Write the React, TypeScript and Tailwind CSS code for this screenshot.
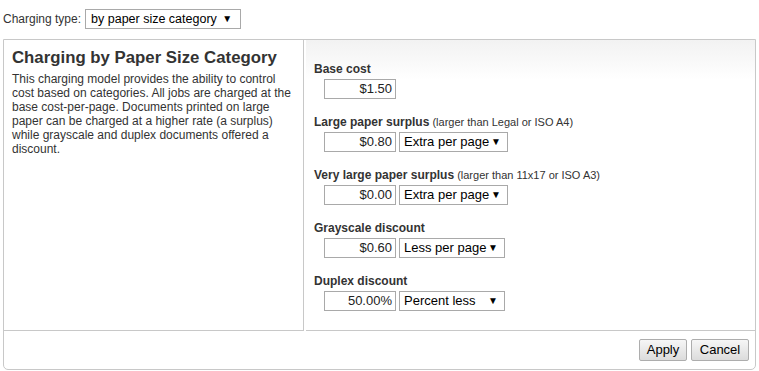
import React from 'react';

type FieldProps = {
  label: string;
  hint?: string;
  value: string;
  unit?: string;
  unitWidth?: string;
};

function FakeSelect({ text, className }: { text: string; className: string }) {
  return (
    <div
      className={`flex h-5 shrink-0 items-center justify-between border border-[#a9a9a9] bg-white text-black ${className}`}
    >
      <span className="whitespace-nowrap">{text}</span>
      <span className="text-[10px] leading-none">▼</span>
    </div>
  );
}

function Field({ label, hint, value, unit, unitWidth }: FieldProps) {
  return (
    <div className="flex flex-col">
      <div className="h-4 whitespace-nowrap leading-4">
        <span className="text-[12px] font-bold">{label}</span>
        {hint && <span className="text-[11px]"> {hint}</span>}
      </div>
      <div className="ml-2.5 mt-[3px] flex gap-[3px]">
        <div className="flex h-5 w-[72px] items-center justify-end border border-[#a9a9a9] bg-white pr-[3px] text-[13px] text-[#222]">
          {value}
        </div>
        {unit && <FakeSelect text={unit} className={`pl-1 pr-1.5 text-[13px] ${unitWidth || 'w-[109px]'}`} />}
      </div>
    </div>
  );
}

export default function App() {
  return (
    <div className="h-[371px] w-[759px] bg-white font-['Liberation_Sans',Arial,sans-serif] text-[#333]">
      <div className="flex h-[39px] items-start px-[3px] pt-[9px]">
        <span className="mr-[4px] text-[12px] leading-5">Charging type:</span>
        <FakeSelect text="by paper size category" className="w-[156px] pl-[5px] pr-[8px] text-[12.5px]" />
      </div>

      <div className="mx-[3px] rounded-b-[5px] border border-[#c8c8c8]">
        <div className="flex h-[291px]">
          <div className="w-[300px] border-r border-b border-[#c8c8c8] px-2 pt-2">
            <h2 className="text-[16.8px] font-bold leading-5">Charging by Paper Size Category</h2>
            <p className="mt-1 text-[12px] leading-[14px]">
              This charging model provides the ability to control cost based on categories. All jobs are charged at
              the base cost-per-page. Documents printed on large paper can be charged at a higher rate (a surplus)
              while grayscale and duplex documents offered a discount.
            </p>
          </div>
          <div className="ml-[2px] flex flex-1 flex-col gap-[14px] border-b border-[#c8c8c8] bg-gradient-to-b from-[#f2f2f2] to-white to-[40px] px-2 pt-5">
            <Field label="Base cost" value="$1.50" />
            <Field
              label="Large paper surplus"
              hint="(larger than Legal or ISO A4)"
              value="$0.80"
              unit="Extra per page"
            />
            <Field
              label="Very large paper surplus"
              hint="(larger than 11x17 or ISO A3)"
              value="$0.00"
              unit="Extra per page"
            />
            <Field label="Grayscale discount" value="$0.60" unit="Less per page" unitWidth="w-[106px]" />
            <Field label="Duplex discount" value="50.00%" unit="Percent less" unitWidth="w-[106px]" />
          </div>
        </div>

        <div className="flex h-[38px] items-start justify-end gap-1 pr-[6px] pt-[8px]">
          <button className="h-[22px] w-[48px] rounded-[2px] border border-[#adadad] bg-gradient-to-b from-[#f6f6f6] to-[#dcdcdc] text-[13px] text-black">
            Apply
          </button>
          <button className="h-[22px] w-[58px] rounded-[2px] border border-[#adadad] bg-gradient-to-b from-[#f6f6f6] to-[#dcdcdc] text-[13px] text-black">
            Cancel
          </button>
        </div>
      </div>
    </div>
  );
}
